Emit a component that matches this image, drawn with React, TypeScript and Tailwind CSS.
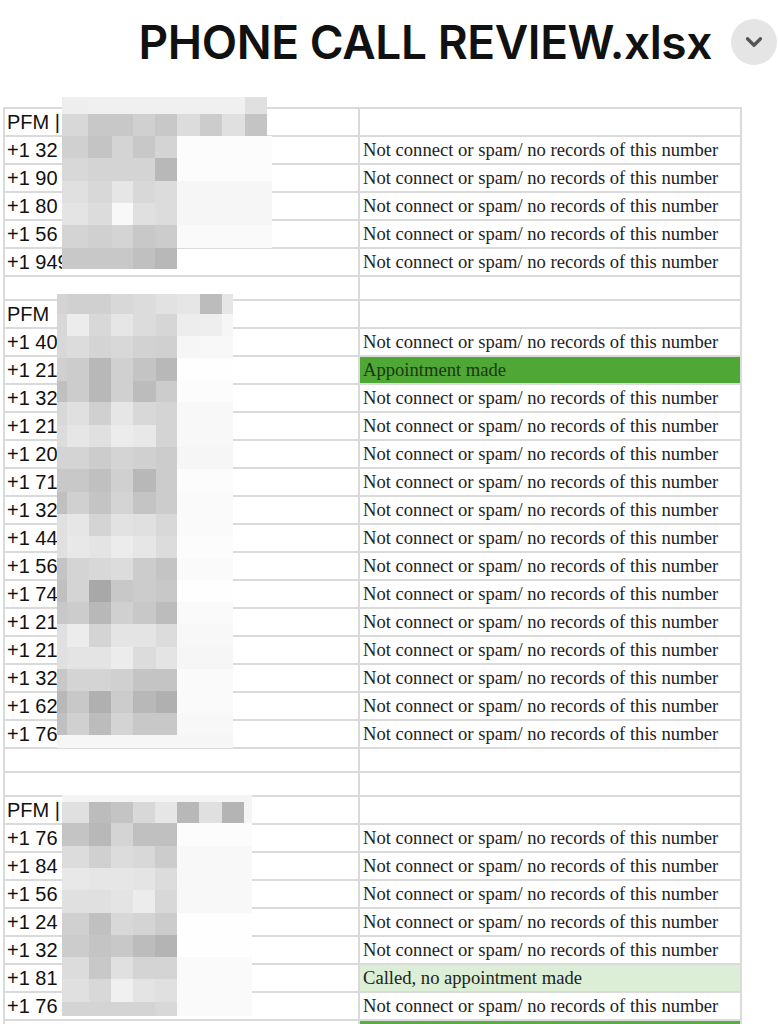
import { ChevronDown } from "lucide-react"

type Status = "none" | "nc" | "appt" | "called" | "green"

type Row = { left: string; status: Status; blank?: boolean }

const NC = "Not connect or spam/ no records of this number"

const rows: Row[] = [
  { left: "PFM |", status: "none" },
  { left: "+1 32", status: "nc" },
  { left: "+1 90", status: "nc" },
  { left: "+1 80", status: "nc" },
  { left: "+1 56", status: "nc" },
  { left: "+1 949", status: "nc" },
  { left: "", status: "none", blank: true },
  { left: "PFM", status: "none" },
  { left: "+1 40", status: "nc" },
  { left: "+1 21", status: "appt" },
  { left: "+1 32", status: "nc" },
  { left: "+1 21", status: "nc" },
  { left: "+1 20", status: "nc" },
  { left: "+1 71", status: "nc" },
  { left: "+1 32", status: "nc" },
  { left: "+1 44", status: "nc" },
  { left: "+1 56", status: "nc" },
  { left: "+1 74", status: "nc" },
  { left: "+1 21", status: "nc" },
  { left: "+1 21", status: "nc" },
  { left: "+1 32", status: "nc" },
  { left: "+1 62", status: "nc" },
  { left: "+1 76", status: "nc" },
  { left: "", status: "none", blank: true },
  { left: "", status: "none", blank: true },
  { left: "PFM |", status: "none" },
  { left: "+1 76", status: "nc" },
  { left: "+1 84", status: "nc" },
  { left: "+1 56", status: "nc" },
  { left: "+1 24", status: "nc" },
  { left: "+1 32", status: "nc" },
  { left: "+1 81", status: "called" },
  { left: "+1 76", status: "nc" },
  { left: "", status: "green" },
]

// pixelated blur over the names, [height, "grey levels"]
type Mosaic = { left: number; top: number; cols: number[]; rows: [number, string][] }

const mosaics: Mosaic[] = [
  {
    left: 62,
    top: 97,
    cols: [26, 24, 21, 22, 22, 23, 22, 23, 22, 5],
    rows: [
      [17, "ee,f0,f0,f0,f0,f0,f0,f0,e0,"],
      [22, "d8,c8,c8,d0,c8,dc,cc,e0,c4,"],
      [22, "d0,c4,d4,c8,d4,fc,fc,fc,fc,fc"],
      [23, "d8,d4,d4,d4,b8,fc,fc,fc,fc,fc"],
      [22, "e0,d8,e6,d8,dc,f6,f6,f6,f6,f6"],
      [22, "e4,dc,f8,e0,dc,f6,f6,f6,f6,f6"],
      [23, "d4,d0,d4,c8,cc,fa,fa,fa,fa,fa"],
      [21, "c8,c8,c8,c0,b8,,,,,"],
    ],
  },
  {
    left: 57,
    top: 294,
    cols: [10, 22, 22, 22, 23, 21, 23, 22, 11],
    rows: [
      [20, "d4,d0,d0,d8,dc,e2,e6,bc,e6"],
      [22, "d8,ec,d8,e6,dc,d6,ed,ee,f6"],
      [22, "d8,dc,d4,d8,d2,d0,f6,f8,f8"],
      [23, "d0,cc,b8,d0,c4,b8,fe,fe,fe"],
      [21, "c0,cc,b8,d0,bc,cc,fc,fc,fc"],
      [23, "d8,e0,d0,e6,d8,d4,f8,f8,f8"],
      [22, "dc,e6,e0,ec,e8,d4,f8,f8,f8"],
      [22, "d4,d4,cc,d4,d0,cc,f6,f6,f6"],
      [23, "c8,c8,c0,d0,b8,cc,fc,fc,fc"],
      [22, "c0,d0,c4,d4,c4,cc,fa,fa,fa"],
      [22, "e0,e6,d4,e2,e0,d8,fa,fa,fa"],
      [22, "e0,e8,e4,ec,e6,dc,fc,fc,fc"],
      [22, "c4,d4,d8,dc,cc,c4,fa,fa,fa"],
      [22, "c0,d4,a8,c8,cc,c8,fe,fe,fe"],
      [22, "c8,cc,b8,d0,c8,bc,fa,fa,fa"],
      [23, "e0,ec,d4,e4,e4,dc,f8,f8,f8"],
      [22, "e0,e4,e4,ec,dc,e4,f6,f6,f6"],
      [22, "c8,d4,d4,d0,c4,c4,fa,fa,fa"],
      [22, "b8,c8,b0,cc,b8,b0,fa,fa,fa"],
      [22, "c0,d0,bc,d4,c8,c8,f8,f8,f8"],
      [13, "f6,f6,f6,f6,f6,f6,f6,f6,f6"],
    ],
  },
  {
    left: 62,
    top: 795,
    cols: [27, 22, 22, 22, 22, 22, 23, 22, 8],
    rows: [
      [7, "f4,f4,f4,f4,f4,f4,f4,f4,f4"],
      [21, "e0,bc,c4,d8,e6,b8,e0,b4,f4"],
      [23, "c4,b8,d4,c0,c0,fc,fc,fc,fc"],
      [22, "dc,d0,dc,d8,cc,f8,f8,f8,f8"],
      [22, "e8,e6,e6,e4,dc,f8,f8,f8,f8"],
      [23, "e0,e0,e4,ec,d8,f8,f8,f8,f8"],
      [22, "d0,c0,d8,d4,cc,fe,fe,fe,fe"],
      [22, "cc,c4,c8,bc,b4,fe,fe,fe,fe"],
      [22, "dc,c8,e0,d4,d4,fa,fa,fa,fa"],
      [23, "e0,d8,f0,e4,e0,fa,fa,fa,fa"],
      [14, "d4,d4,d4,d4,d8,fa,fa,fa,fa"],
    ],
  },
]

const grey = (v: string) => (v ? `#${v}${v}${v}` : "transparent")

function MosaicBlock({ m }: { m: Mosaic }) {
  return (
    <div className="absolute flex flex-col" style={{ left: m.left, top: m.top }}>
      {m.rows.map(([h, tones], i) => (
        <div key={i} className="flex" style={{ height: h }}>
          {tones.split(",").map((t, j) => (
            <div key={j} style={{ width: m.cols[j], background: grey(t) }} />
          ))}
        </div>
      ))}
    </div>
  )
}

function StatusCell({ status }: { status: Status }) {
  if (status === "appt")
    return (
      <div className="flex flex-1 items-center bg-[#4fa735] pl-[3px] text-[#1c3812]">
        Appointment made
      </div>
    )
  if (status === "green") return <div className="flex-1 bg-[#5aad42]" />
  if (status === "called")
    return (
      <div className="flex flex-1 items-center bg-[#dcefd6] pl-[3px]">
        Called, no appointment made
      </div>
    )
  return (
    <div className="flex flex-1 items-center pl-[3px]">
      {status === "nc" ? NC : ""}
    </div>
  )
}

export default function App() {
  return (
    <div className="relative min-h-screen w-[778px] overflow-hidden bg-white">
      <header className="flex h-[84px] items-center justify-end gap-[19px] pr-[1px]">
        <h1 className="font-['Inter',sans-serif] text-[46px] font-semibold tracking-[-0.4px] text-[#111]">
          PHONE CALL REVIEW.xlsx
        </h1>
        <div className="flex h-[46px] w-[46px] items-center justify-center rounded-full bg-[#e5e5e5]">
          <ChevronDown size={26} strokeWidth={3} className="text-[#555]" />
        </div>
      </header>

      <div className="mt-[23px] ml-[3px] w-[739px] border-t-2 border-l-2 border-[#dadada]">
        {rows.map((r, i) => (
          <div
            key={i}
            className={`flex border-b-2 border-[#dadada] ${r.blank ? "h-[24px]" : "h-[28px]"}`}
          >
            <div className="flex w-[355px] items-center border-r-2 border-[#dadada] pl-[2px] font-['Liberation_Sans',Arial,sans-serif] text-[20px] text-[#111]">
              {r.left}
            </div>
            <div className="flex flex-1 border-r-2 border-[#dadada] font-['Liberation_Serif','Times_New_Roman',serif] text-[18.6px] text-[#222]">
              <StatusCell status={r.status} />
            </div>
          </div>
        ))}
      </div>

      {mosaics.map((m, i) => (
        <MosaicBlock key={i} m={m} />
      ))}
    </div>
  )
}
